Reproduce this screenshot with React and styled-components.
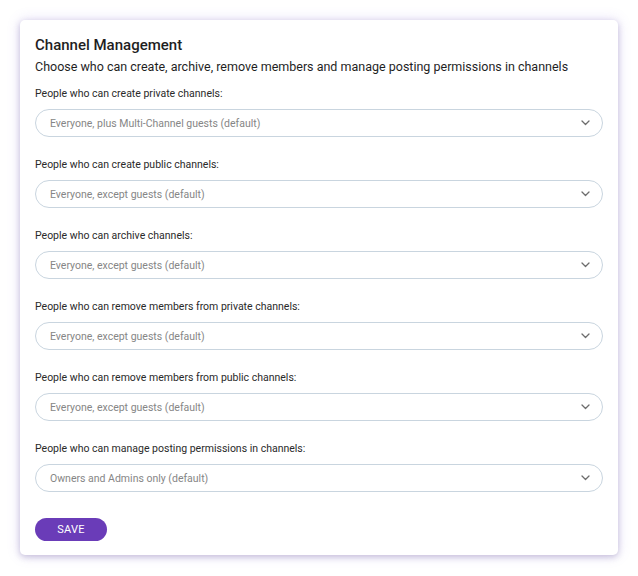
import React from "react";
import styled, { createGlobalStyle } from "styled-components";

const Global = createGlobalStyle`
  html, body { margin: 0; padding: 0; background: #fff; }
  body { font-family: Roboto, "Liberation Sans", sans-serif; color: #1d1d1f; }
`;

const Page = styled.div`
  padding: 20px 20px 21px 20px;
`;

const Card = styled.div`
  background: #fff;
  border-radius: 5px;
  box-shadow: 0 2px 6px rgba(60, 40, 120, 0.25), 0 0 14px rgba(120, 90, 220, 0.18);
  padding: 16px 15px 14px 15px;
  display: flex;
  flex-direction: column;
`;

const Title = styled.h2`
  margin: 0;
  font-size: 15px;
  font-weight: 500;
  line-height: 18px;
  color: #1f1f1f;
`;

const Subtitle = styled.p`
  margin: 4px 0 0 0;
  font-size: 12.5px;
  line-height: 18px;
  color: #1f1f1f;
`;

const Field = styled.div`
  display: flex;
  flex-direction: column;
  margin-top: ${(p) => (p.first ? "11px" : "21px")};
`;

const Label = styled.label`
  font-size: 10.5px;
  line-height: 14px;
  color: #2a2a2a;
  margin-bottom: 8px;
`;

const Select = styled.div`
  height: 28px;
  box-sizing: border-box;
  border: 1.5px solid #c9d5df;
  border-radius: 14px;
  display: flex;
  align-items: center;
  justify-content: space-between;
  padding: 0 12px 0 14px;
  font-size: 10.5px;
  color: #868686;
`;

const Chevron = () => (
  <svg width="9" height="6" viewBox="0 0 9 6" fill="none">
    <path d="M1 1l3.5 3.5L8 1" stroke="#6d6d6d" strokeWidth="1.3" strokeLinecap="round" strokeLinejoin="round" />
  </svg>
);

const SaveButton = styled.button`
  align-self: flex-start;
  margin-top: 26px;
  width: 72px;
  height: 23px;
  border: none;
  border-radius: 12px;
  background: #6a3cb8;
  color: #fff;
  font-family: Roboto, "Liberation Sans", sans-serif;
  font-size: 11px;
  font-weight: 400;
  letter-spacing: 0.2px;
  padding: 0;
`;

const fields = [
  ["People who can create private channels:", "Everyone, plus Multi-Channel guests (default)"],
  ["People who can create public channels:", "Everyone, except guests (default)"],
  ["People who can archive channels:", "Everyone, except guests (default)"],
  ["People who can remove members from private channels:", "Everyone, except guests (default)"],
  ["People who can remove members from public channels:", "Everyone, except guests (default)"],
  ["People who can manage posting permissions in channels:", "Owners and Admins only (default)"],
];

export default function App() {
  return (
    <>
      <Global />
      <Page>
        <Card>
          <Title>Channel Management</Title>
          <Subtitle>Choose who can create, archive, remove members and manage posting permissions in channels</Subtitle>
          {fields.map(([l, v], i) => (
            <Field key={i} first={i === 0}>
              <Label>{l}</Label>
              <Select>
                <span>{v}</span>
                <Chevron />
              </Select>
            </Field>
          ))}
          <SaveButton>SAVE</SaveButton>
        </Card>
      </Page>
    </>
  );
}
